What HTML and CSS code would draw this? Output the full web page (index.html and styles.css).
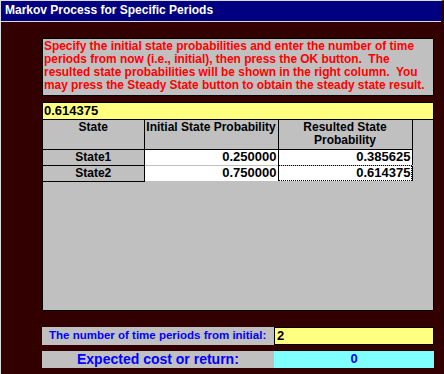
FILE: index.html
```html
<!DOCTYPE html>
<html lang="en">

<head>
    <meta charset="UTF-8">
    <meta name="viewport" content="width=device-width, initial-scale=1.0">
    <title>Markov Process for Specific Periods</title>
    <link rel="stylesheet" href="styles.css">
</head>

<body>
    <div class="window">
        <div class="titlebar">Markov Process for Specific Periods</div>

        <div class="content">
            <div class="instructions">
                Specify the initial state probabilities and enter the number of time<br>
                periods from now (i.e., initial), then press the OK button.&nbsp; The<br>
                resulted state probabilities will be shown in the right column.&nbsp; You<br>
                may press the Steady State button to obtain the steady state result.
            </div>

            <div class="valuebar">0.614375</div>

            <div class="grid">
                <table class="prob-table">
                    <tr class="head">
                        <th class="col-state">State</th>
                        <th class="col-init">Initial State Probability</th>
                        <th class="col-result">Resulted State<br>Probability</th>
                    </tr>
                    <tr>
                        <td class="name">State1</td>
                        <td class="num">0.250000</td>
                        <td class="num">0.385625</td>
                    </tr>
                    <tr>
                        <td class="name">State2</td>
                        <td class="num">0.750000</td>
                        <td class="num focus">0.614375</td>
                    </tr>
                </table>
            </div>

            <div class="field-row periods">
                <div class="label">The number of time periods from initial:</div>
                <div class="input">2</div>
            </div>

            <div class="field-row cost">
                <div class="label">Expected cost or return:</div>
                <div class="output">0</div>
            </div>
        </div>
    </div>
</body>

</html>
```

FILE: styles.css
```css
* {
    margin: 0px;
    box-sizing: border-box;
}

body {
    width: 444px;
    height: 374px;
    overflow: hidden;
    font-family: "Liberation Sans", Arial, sans-serif;
    font-weight: bold;
}

.window {
    width: 100%;
    height: 100%;
    background-color: #330000;
    border-top: 1px solid #dcdcdc;
    border-left: 1px solid #dcdcdc;
    border-right: 3px solid #2a0000;
}

.titlebar {
    height: 21px;
    background-color: #000080;
    border-bottom: 1px solid #dcdcdc;
    color: white;
    font-size: 12px;
    line-height: 19px;
    padding-left: 4px;
}

.content {
    padding: 16px 7px 0px 41px;
}

.instructions {
    height: 58px;
    background-color: #c0c0c0;
    border: 1px solid black;
    color: #ff0000;
    font-size: 11.9px;
    line-height: 13px;
    padding: 1px 0px 0px 1px;
    white-space: nowrap;
    overflow: hidden;
}

.valuebar {
    margin-top: 6px;
    height: 18px;
    background-color: #ffff80;
    border: 1px solid black;
    font-size: 13px;
    line-height: 16px;
    padding-left: 1px;
}

.grid {
    height: 191px;
    background-color: #c0c0c0;
    border: 1px solid black;
    border-top: none;
}

.prob-table {
    border-collapse: collapse;
    font-size: 12px;
}

.prob-table th {
    height: 29px;
    vertical-align: top;
    font-weight: bold;
    line-height: 13px;
    padding: 1px 0px 0px 0px;
    border-right: 1px solid black;
    border-bottom: 1px solid black;
    white-space: nowrap;
}

.col-state {
    width: 101px;
}

.col-init {
    width: 134px;
}

.col-result {
    width: 134px;
}

.prob-table td {
    height: 16px;
    line-height: 14px;
    padding: 0px 1px;
    border-right: 1px solid black;
    border-bottom: 1px solid black;
}

.prob-table td.name {
    text-align: center;
}

.prob-table td.num {
    background-color: white;
    text-align: right;
    font-size: 13px;
    border-bottom-color: #c0c0c0;
}

.prob-table td.focus {
    outline: 1px dotted black;
    outline-offset: -1px;
}

.field-row {
    display: flex;
    margin-top: 16px;
    height: 18px;
}

.field-row.cost {
    margin-top: 6px;
    height: 17px;
}

.label {
    width: 232px;
    background-color: #c0c0c0;
    color: #0000ff;
    font-size: 11.5px;
    line-height: 16px;
    padding-left: 7px;
    white-space: nowrap;
}

.cost .label {
    font-size: 14px;
    padding-left: 35px;
}

.input {
    flex: 1;
    background-color: #ffff80;
    border: 1px solid black;
    font-size: 13px;
    line-height: 16px;
    padding-left: 2px;
}

.output {
    flex: 1;
    background-color: #80ffff;
    color: #0000ff;
    text-align: center;
    font-size: 13px;
    line-height: 16px;
}
```
